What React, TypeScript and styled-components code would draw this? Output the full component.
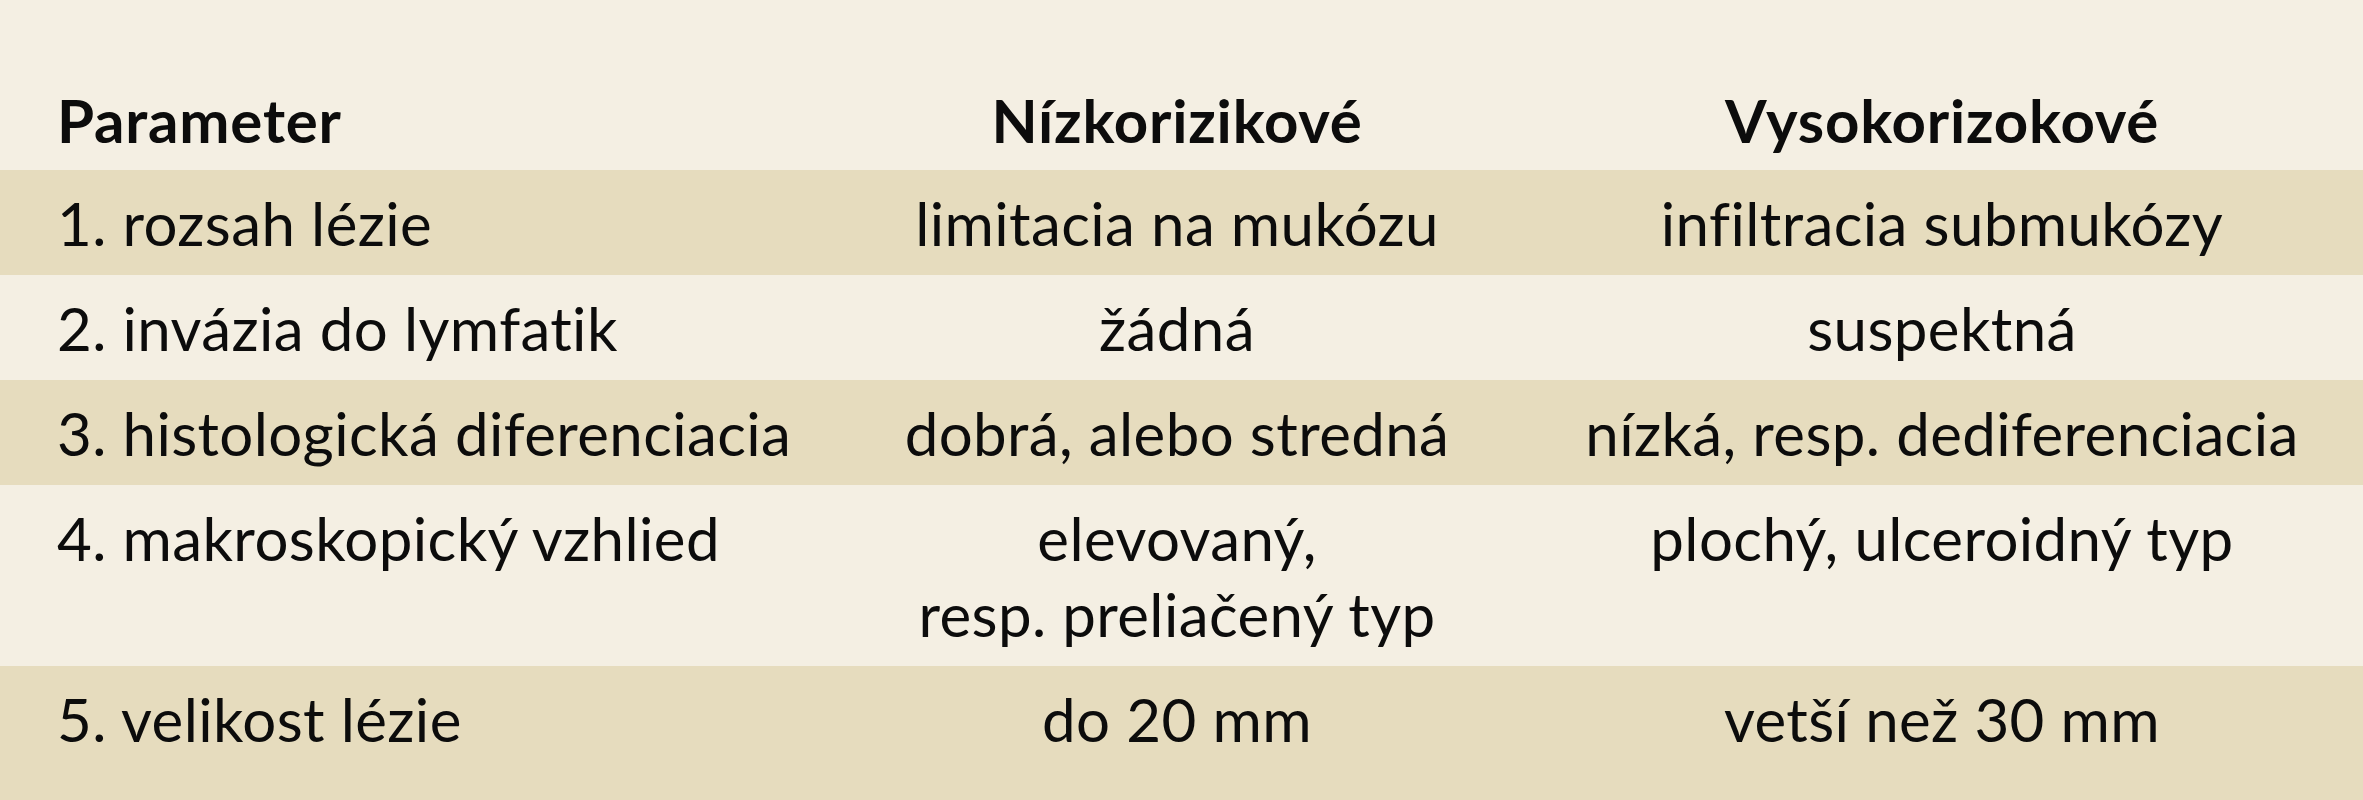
import { FC } from "react";
import styled, { createGlobalStyle } from "styled-components";

const GlobalStyle = createGlobalStyle`
  html, body {
    margin: 0;
    padding: 0;
    background: #f4efe3;
  }
  body {
    font-family: Lato, "Open Sans", "Liberation Sans", sans-serif;
    color: #0c0c0c;
  }
`;

type Row = {
  param: string;
  low: string[];
  high: string[];
};

const rows: Row[] = [
  { param: "1. rozsah lézie", low: ["limitacia na mukózu"], high: ["infiltracia submukózy"] },
  { param: "2. invázia do lymfatik", low: ["žádná"], high: ["suspektná"] },
  {
    param: "3. histologická diferenciacia",
    low: ["dobrá, alebo stredná"],
    high: ["nízká, resp. dediferenciacia"],
  },
  {
    param: "4. makroskopický vzhlied",
    low: ["elevovaný,", "resp. preliačený typ"],
    high: ["plochý, ulceroidný typ"],
  },
  { param: "5. velikost lézie", low: ["do 20 mm"], high: ["vetší než 30 mm"] },
];

const STable = styled.div`
  width: 2363px;
  display: flex;
  flex-direction: column;
`;

const SRow = styled.div<{ $shaded?: boolean; $head?: boolean; $last?: boolean }>`
  display: grid;
  grid-template-columns: 812px 730px 800px;
  padding: ${(p) => (p.$head ? "82px 21px 12px 0" : p.$last ? "15px 21px 64px 0" : "15px 21px 14px 0")};
  background: ${(p) => (p.$shaded ? "#e6dcbe" : "#f4efe3")};
  font-size: 60px;
  line-height: 76px;
  letter-spacing: ${(p) => (p.$head ? "0.8px" : "0.4px")};
  font-weight: ${(p) => (p.$head ? 700 : 400)};
`;

const SParam = styled.div`
  padding-left: 57px;
  white-space: nowrap;
`;

const SCell = styled.div`
  text-align: center;
  white-space: nowrap;
`;

const App: FC = () => {
  return (
    <>
      <GlobalStyle />
      <STable>
        <SRow $head>
          <SParam>Parameter</SParam>
          <SCell>Nízkorizikové</SCell>
          <SCell>Vysokorizokové</SCell>
        </SRow>
        {rows.map((row, index) => (
          <SRow key={row.param} $shaded={index % 2 === 0} $last={index === rows.length - 1}>
            <SParam>{row.param}</SParam>
            <SCell>
              {row.low.map((line) => (
                <div key={line}>{line}</div>
              ))}
            </SCell>
            <SCell>
              {row.high.map((line) => (
                <div key={line}>{line}</div>
              ))}
            </SCell>
          </SRow>
        ))}
      </STable>
    </>
  );
};

export default App;
